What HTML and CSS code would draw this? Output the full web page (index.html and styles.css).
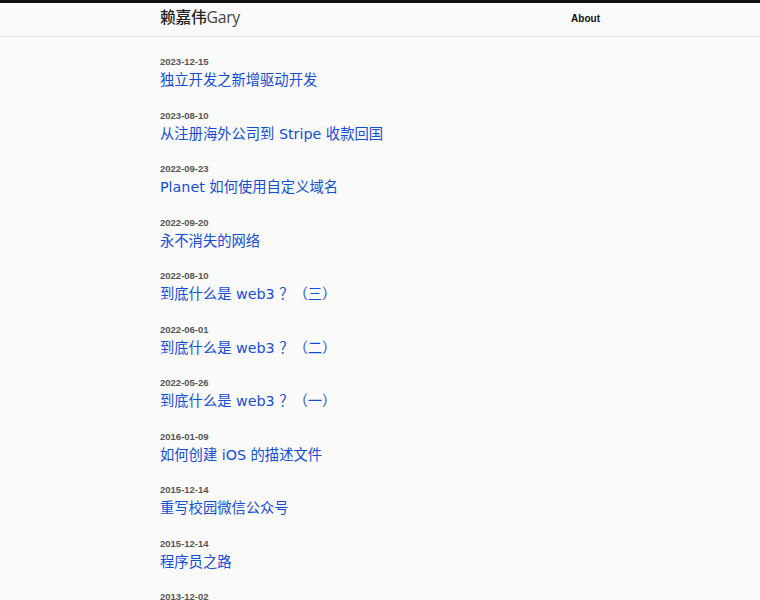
FILE: index.html
```html
<!DOCTYPE html>
<html lang="zh">
<head>
    <meta charset="UTF-8" />
    <title>赖嘉伟Gary</title>
    <link rel="stylesheet" href="styles.css">
</head>
<body>
    <header class="site-header">
        <div class="wrap header-inner">
            <a class="site-title" href="#"><span class="cn">赖嘉伟</span>Gary</a>
            <nav class="nav"><a href="#">About</a></nav>
        </div>
    </header>
    <main class="wrap posts">
        <div class="post"><div class="date">2023-12-15</div><a class="title" href="#">独立开发之新增驱动开发</a></div>
        <div class="post"><div class="date">2023-08-10</div><a class="title" href="#">从注册海外公司到 Stripe 收款回国</a></div>
        <div class="post"><div class="date">2022-09-23</div><a class="title" href="#">Planet 如何使用自定义域名</a></div>
        <div class="post"><div class="date">2022-09-20</div><a class="title" href="#">永不消失的网络</a></div>
        <div class="post"><div class="date">2022-08-10</div><a class="title" href="#">到底什么是 web3 ？（三）</a></div>
        <div class="post"><div class="date">2022-06-01</div><a class="title" href="#">到底什么是 web3 ？（二）</a></div>
        <div class="post"><div class="date">2022-05-26</div><a class="title" href="#">到底什么是 web3 ？（一）</a></div>
        <div class="post"><div class="date">2016-01-09</div><a class="title" href="#">如何创建 iOS 的描述文件</a></div>
        <div class="post"><div class="date">2015-12-14</div><a class="title" href="#">重写校园微信公众号</a></div>
        <div class="post"><div class="date">2015-12-14</div><a class="title" href="#">程序员之路</a></div>
        <div class="post"><div class="date">2013-12-02</div><a class="title" href="#">Hello World</a></div>
    </main>
</body>
</html>
```
FILE: styles.css
```css
* {
    box-sizing: border-box;
}
body {
    margin: 0;
    background-color: #fafafa;
    font-family: "DejaVu Sans", "Noto Sans CJK SC", sans-serif;
    color: #333;
}
a {
    text-decoration: none;
}
.wrap {
    width: 440px;
    margin: 0 auto;
}
.site-header {
    border-top: 3px solid #111;
    border-bottom: 1px solid #e5e5e5;
    height: 37px;
}
.header-inner {
    display: flex;
    justify-content: space-between;
    align-items: center;
    height: 27px;
}
.site-title {
    font-family: "Open Sans", "Noto Sans CJK SC", sans-serif;
    font-size: 15.8px;
    color: #444;
    letter-spacing: -0.3px;
}
.site-title .cn {
    font-weight: 500;
    color: #222;
}
.nav a {
    font-family: "Liberation Sans", sans-serif;
    font-size: 10px;
    font-weight: bold;
    color: #111;
}
.posts {
    padding-top: 19px;
}
.post {
    height: 53.5px;
}
.date {
    font-family: "Liberation Sans", sans-serif;
    font-size: 9.5px;
    font-weight: bold;
    color: #555;
    line-height: 12px;
}
.title {
    display: block;
    font-size: 14.3px;
    color: #144ed6;
    line-height: 24px;
}
```
